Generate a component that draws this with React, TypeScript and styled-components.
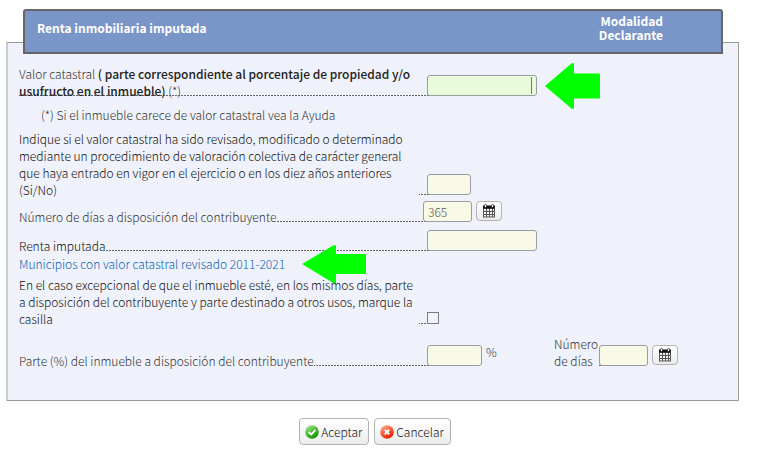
import React from "react";
import styled, { createGlobalStyle, css } from "styled-components";

const panelColor = "#eff2fa";

const GlobalStyle = createGlobalStyle`
  *, *::before, *::after { box-sizing: border-box; }
  body { margin: 0; background: #fff; }
  body, button, input {
    font-family: "Noto Sans CJK SC", "Open Sans", sans-serif;
    font-size: 12px;
    font-weight: 300;
    line-height: 17px;
  }
`;

const Page = styled.main`
  padding: 42px 22px 4px 6px;
  color: #333;
`;

const Panel = styled.section`
  padding: 0 13px 30px 11px;
  background: ${panelColor};
  border: 1px solid #999;
  border-left: 2px solid #ccc;
`;

const Header = styled.header`
  display: flex;
  justify-content: space-between;
  align-items: center;
  height: 45px;
  margin: -34px 2px 11px 4px;
  padding: 0 58px 8px 12px;
  color: #fff;
  background: #7a95c8;
  border: 2px solid #666;
  border-radius: 3px 3px 0 0;
`;

const Title = styled.h1`
  margin: 0;
  font-size: 12px;
  line-height: 17px;
  font-weight: 700;
`;

const Mode = styled.div`
  font-weight: 700;
  line-height: 14px;
  text-align: right;
`;

const Row = styled.div<{ $gap: number }>`
  display: grid;
  grid-template-columns: minmax(0, 412px) 1fr;
  align-items: end;
  margin-top: ${(p) => p.$gap}px;
`;

const Note = styled.p`
  margin: 6px 0 0;
  padding-left: 22px;
`;

const Label = styled.label<{ $dark?: boolean; $narrow?: boolean }>`
  display: flex;
  padding-bottom: 1px;
  color: ${(p) => (p.$dark ? "#111" : "#333")};
  background: repeating-linear-gradient(90deg, #666 0 2px, transparent 2px 3px)
    0 calc(100% - 4px) / 100% 1px no-repeat;
  ${(p) => p.$narrow && css`width: 53px;`}
`;

const LabelText = styled.span<{ $underlined?: boolean; $full?: boolean }>`
  white-space: nowrap;
  background: ${(p) => (p.$underlined ? "transparent" : panelColor)};
  ${(p) => p.$full && css`width: calc(100% - 12px);`}
  b { color: #222; font-weight: 500; }
`;

const Controls = styled.div<{ $wide?: boolean }>`
  display: flex;
  gap: 4px;
  position: relative;
  margin-left: ${(p) => (p.$wide ? -8 : -4)}px;
  padding-bottom: 4px;
`;

const Field = styled.input<{ $width: number; $active?: boolean }>`
  width: ${(p) => p.$width}px;
  height: 21px;
  padding: 0 4px;
  color: #555;
  background: ${(p) =>
    p.$active
      ? "linear-gradient(#777, #777) right 4px center / 1px 17px no-repeat #e8fcdc"
      : "#f9fae6"};
  border: 1px solid #999ca3;
  border-radius: 3px;
  outline: none;
`;

const Check = styled.input`
  appearance: none;
  width: 12px;
  height: 12px;
  margin: 0;
  background: #f2f4f8;
  border: 1px solid #777d88;
`;

const Unit = styled.span`
  line-height: 13px;
`;

const Days = styled.div`
  display: flex;
  align-items: flex-end;
`;

const PartControls = styled.div`
  display: grid;
  grid-template-columns: 123px 1fr;
  align-items: end;
`;

const Button = styled.button`
  display: inline-flex;
  align-items: center;
  justify-content: center;
  gap: 2px;
  height: 27px;
  padding: 0 6px 0 5px;
  color: #111;
  background: linear-gradient(#fff, #ececec);
  border: 1px solid #b3b3b3;
  border-radius: 4px;
`;

const IconButton = styled(Button)`
  width: 26px;
  height: 20px;
  padding: 0;
`;

const Link = styled.a`
  color: #0c62b6;
  text-decoration: none;
`;

const LinkLine = styled.div`
  display: flex;
  position: relative;
  width: fit-content;
`;

const Pointer = styled.svg`
  position: absolute;
  left: calc(100% + 17px);
  top: 50%;
  transform: translateY(-50%);
  fill: #00ff00;
`;

const PointedField = styled.div`
  display: flex;
  position: relative;
  ${Pointer} { left: calc(100% + 8px); }
`;

const Actions = styled.div`
  display: flex;
  justify-content: center;
  gap: 5px;
  margin-top: 17px;
  padding-left: 5px;
`;

const CalendarIcon = () => (
  <svg width="14" height="14" viewBox="0 0 14 14" aria-hidden="true">
    <path d="M1 2h12v11.5H1z" fill="#555" />
    <path d="M1 1.5h12V4.500H1z" fill="#111" />
    <path d="M2 5h2v2H2zM5 5h2v2H5zM8 5h2v2H8zM11 5h1v2h-1zM2 8h2v2H2zM5 8h2v2H5zM8 8h2v2H8zM11 8h1v2h-1zM2 11h2v1.5H2zM5 11h2v1.5H5zM8 11h2v1.5H8zM11 11h1v1.5h-1z" fill="#f4f4f4" />
    <rect x="2.5" y="0.5" width="2" height="3" rx="1" fill="#fff" stroke="#222" strokeWidth="0.8" />
    <rect x="9.5" y="0.5" width="2" height="3" rx="1" fill="#fff" stroke="#222" strokeWidth="0.8" />
  </svg>
);

const AcceptIcon = () => (
  <svg width="14" height="14" viewBox="0 0 14 14" aria-hidden="true">
    <defs>
      <linearGradient id="accept" x1="0" y1="0" x2="0.6" y2="1">
        <stop offset="0" stopColor="#b4e8a0" />
        <stop offset="0.55" stopColor="#4fbd38" />
        <stop offset="1" stopColor="#16920b" />
      </linearGradient>
    </defs>
    <circle cx="7" cy="7" r="6.8" fill="url(#accept)" />
    <path d="M3.6 7 6.2 9.4 10.4 5" fill="none" stroke="#fff" strokeWidth="1.8" />
  </svg>
);

const CancelIcon = () => (
  <svg width="14" height="14" viewBox="0 0 14 14" aria-hidden="true">
    <defs>
      <linearGradient id="cancel" x1="0" y1="0" x2="0.6" y2="1">
        <stop offset="0" stopColor="#ffb9a2" />
        <stop offset="0.55" stopColor="#f85c3a" />
        <stop offset="1" stopColor="#ea1f06" />
      </linearGradient>
    </defs>
    <circle cx="7" cy="7" r="6.8" fill="url(#cancel)" />
    <path d="M4.8 4.8 9.2 9.2M9.2 4.8 4.8 9.2" stroke="#fff" strokeWidth="2" />
  </svg>
);

export default function App() {
  return (
    <>
      <GlobalStyle />
      <Page>
        <Panel>
          <Header>
            <Title>Renta inmobiliaria imputada</Title>
            <Mode>
              Modalidad
              <br />
              Declarante
            </Mode>
          </Header>

          <Row $gap={0}>
            <Label htmlFor="valor">
              <LabelText $underlined>
                Valor catastral <b>( parte correspondiente al porcentaje de propiedad y/o</b>
                <br />
                <b>usufructo en el inmueble)</b> (*)
              </LabelText>
            </Label>
            <Controls>
              <PointedField>
                <Field id="valor" $width={110} $active />
                <Pointer width="55" height="47" viewBox="0 0 55 47" aria-hidden="true">
                  <path d="M0 23.5 27 0.5 29 1V11H54L55 12V36H29V46L27 46.5Z" />
                </Pointer>
              </PointedField>
            </Controls>
          </Row>

          <Note>(*) Si el inmueble carece de valor catastral vea la Ayuda</Note>

          <Row $gap={7}>
            <Label htmlFor="revisado" $dark>
              <LabelText $full>
                Indique si el valor catastral ha sido revisado, modificado o determinado
                <br />
                mediante un procedimiento de valoración colectiva de carácter general
                <br />
                que haya entrado en vigor en el ejercicio o en los diez años anteriores
                <br />
                (Si/No)
              </LabelText>
            </Label>
            <Controls>
              <Field id="revisado" $width={44} />
            </Controls>
          </Row>

          <Row $gap={2}>
            <Label htmlFor="dias">
              <LabelText>Número de días a disposición del contribuyente</LabelText>
            </Label>
            <Controls $wide>
              <Field id="dias" $width={49} defaultValue="365" />
              <IconButton type="button" aria-label="Calendario">
                <CalendarIcon />
              </IconButton>
            </Controls>
          </Row>

          <Row $gap={4}>
            <Label htmlFor="renta" $dark>
              <LabelText>Renta imputada</LabelText>
            </Label>
            <Controls>
              <Field id="renta" $width={110} />
            </Controls>
          </Row>

          <LinkLine>
            <Link href="#municipios">Municipios con valor catastral revisado 2011-2021</Link>
            <Pointer width="64" height="40" viewBox="0 0 64 40" aria-hidden="true">
              <path d="M0 20 32 1 34 1.500V10H64V30H34V39L32 39.500Z" />
            </Pointer>
          </LinkLine>

          <Row $gap={4}>
            <Label htmlFor="casilla" $dark>
              <LabelText $full>
                En el caso excepcional de que el inmueble esté, en los mismos días, parte
                <br />
                a disposición del contribuyente y parte destinado a otros usos, marque la
                <br />
                casilla
              </LabelText>
            </Label>
            <Controls>
              <Check id="casilla" type="checkbox" />
            </Controls>
          </Row>

          <Row $gap={7}>
            <Label htmlFor="parte">
              <LabelText>Parte (%) del inmueble a disposición del contribuyente</LabelText>
            </Label>
            <PartControls>
              <Controls>
                <Field id="parte" $width={55} />
                <Unit>%</Unit>
              </Controls>
              <Days>
                <Label htmlFor="diasParte" $narrow>
                  <LabelText>
                    Número
                    <br />
                    de días
                  </LabelText>
                </Label>
                <Controls $wide>
                  <Field id="diasParte" $width={49} />
                  <IconButton type="button" aria-label="Calendario">
                    <CalendarIcon />
                  </IconButton>
                </Controls>
              </Days>
            </PartControls>
          </Row>
        </Panel>

        <Actions>
          <Button type="button">
            <AcceptIcon />
            Aceptar
          </Button>
          <Button type="button">
            <CancelIcon />
            Cancelar
          </Button>
        </Actions>
      </Page>
    </>
  );
}
